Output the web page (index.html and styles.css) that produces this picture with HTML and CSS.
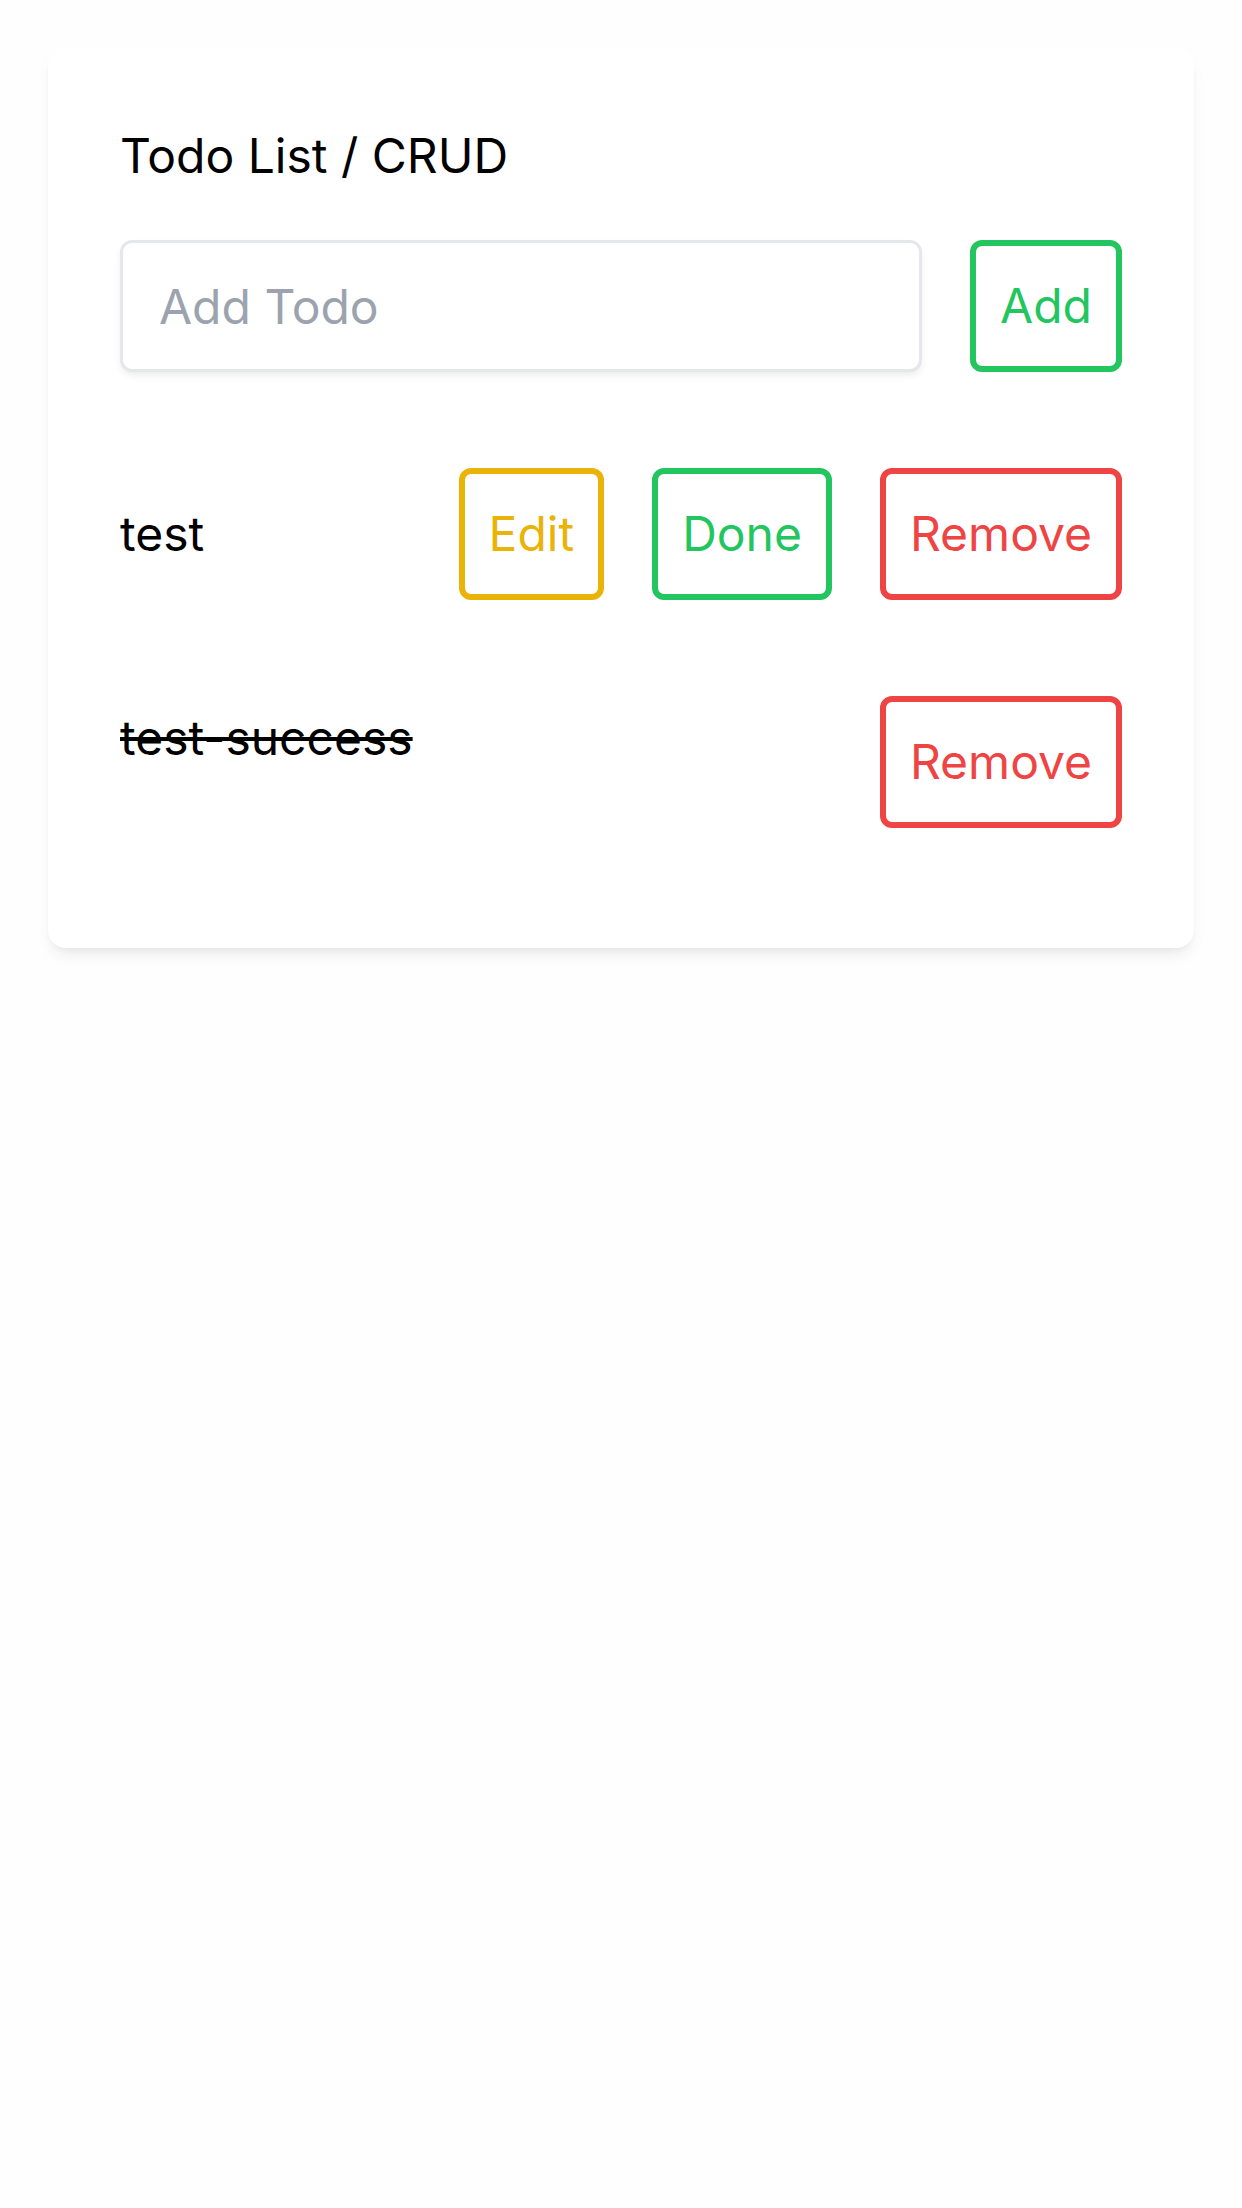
FILE: index.html
```html
<!DOCTYPE html>
<html lang="en">
<head>
<meta charset="utf-8">
<title>Todo List / CRUD</title>
<link rel="stylesheet" href="styles.css">
</head>
<body>
  <div class="card">
    <h1 class="title">Todo List / CRUD</h1>
    <div class="add-row">
      <input class="todo-input" type="text" placeholder="Add Todo">
      <button class="btn btn-green">Add</button>
    </div>
    <div class="todo-row">
      <span class="todo-text">test</span>
      <div class="actions">
        <button class="btn btn-yellow">Edit</button>
        <button class="btn btn-green">Done</button>
        <button class="btn btn-red">Remove</button>
      </div>
    </div>
    <div class="todo-row todo-row-done">
      <span class="todo-text done">test-success</span>
      <div class="actions">
        <button class="btn btn-red">Remove</button>
      </div>
    </div>
  </div>
</body>
</html>
```

FILE: styles.css
```css
* { box-sizing: border-box; }

html, body {
  margin: 0;
  padding: 0;
  background: #fefefe;
  font-family: Inter, "Liberation Sans", sans-serif;
  color: #000;
}

body {
  min-height: 2208px;
  padding-top: 48px;
}

.card {
  display: flex;
  flex-direction: column;
  margin: 0 48px;
  padding: 72px;
  background: #ffffff;
  border-radius: 18px;
  box-shadow: 0 10px 16px -4px rgba(0, 0, 0, 0.08), 0 4px 8px -4px rgba(0, 0, 0, 0.06);
}

.title {
  margin: 0 0 48px 0;
  font-size: 48px;
  line-height: 72px;
  font-weight: 400;
}

.add-row {
  display: flex;
  gap: 48px;
  margin-bottom: 48px;
}

.todo-input {
  flex: 1;
  min-width: 0;
  height: 132px;
  padding: 0 36px;
  border: 3px solid #e5e7eb;
  border-radius: 12px;
  font-family: inherit;
  font-size: 48px;
  color: #111;
  background: #fff;
  box-shadow: 0 4px 8px -2px rgba(0, 0, 0, 0.10);
  outline: none;
}

.todo-input::placeholder {
  color: #9ca3af;
}

.btn {
  height: 132px;
  padding: 0 24px;
  border: 6px solid currentColor;
  border-radius: 12px;
  background: #fff;
  font-family: inherit;
  font-size: 48px;
  line-height: 72px;
  cursor: pointer;
}

.btn-green { color: #22c55e; }
.btn-yellow { color: #eab308; }
.btn-red { color: #ef4444; }

.todo-row {
  display: flex;
  align-items: center;
  justify-content: space-between;
  margin: 48px 0;
}

.todo-text {
  font-size: 48px;
  line-height: 72px;
}

.todo-row-done .todo-text {
  align-self: flex-start;
  margin-top: 6px;
}

.done {
  text-decoration: line-through;
}

.actions {
  display: flex;
  gap: 48px;
}
```
